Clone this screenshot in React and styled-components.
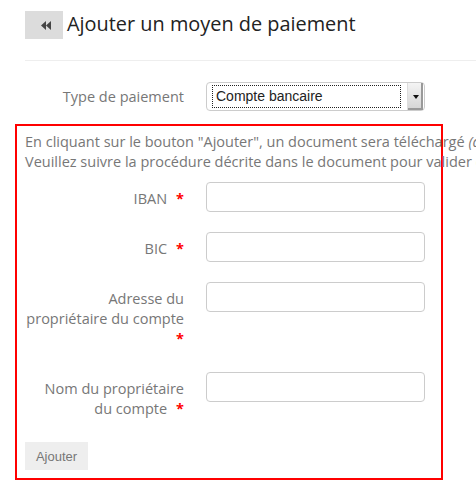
import React from 'react';
import styled, { createGlobalStyle } from 'styled-components';

const GlobalStyle = createGlobalStyle`
    html, body {
        margin: 0;
        padding: 0;
        background: #fff;
        overflow: hidden;
    }

    body {
        font-family: 'Open Sans', 'Noto Sans', sans-serif;
        font-size: 14.5px;
        line-height: 20px;
        color: #333;
    }
`;

const Page = styled.div`
    width: 476px;
    height: 492px;
    padding-top: 11px;
    box-sizing: border-box;
    overflow: hidden;
`;

const Header = styled.div`
    display: flex;
    align-items: flex-start;
    gap: 4px;
    padding-left: 25px;
`;

const BackButton = styled.button`
    display: flex;
    align-items: center;
    justify-content: center;
    width: 38px;
    height: 28px;
    padding: 0 0 0 4px;
    border: 0;
    background: #dcdcdc;
    color: #444;
    cursor: pointer;
`;

const Title = styled.h1`
    margin: 0;
    font-size: 19.9px;
    line-height: 26px;
    font-weight: 400;
    color: #222;
`;

const Divider = styled.hr`
    margin: 21px 0 0 25px;
    border: 0;
    border-top: 1px solid #eee;
`;

const TypeRow = styled.div`
    display: flex;
    align-items: center;
    margin-top: 21px;
    padding-left: 25px;
`;

const Label = styled.label`
    width: 159px;
    flex: none;
    padding: ${props => (props.top ? '7px 0 3px' : '0')};
    white-space: nowrap;
    text-align: right;
    color: #777;
`;

const Required = styled.span`
    margin-left: 9px;
    color: #f00;
    font-weight: 700;
`;

const Select = styled.div`
    display: flex;
    align-items: center;
    width: 219px;
    height: 29px;
    margin-left: 22px;
    padding: 0 1px 0 5px;
    box-sizing: border-box;
    border: 1px solid #ccc;
    border-radius: 4px;
    font-family: 'Liberation Sans', Arial, sans-serif;
    font-size: 14px;
    color: #222;
`;

const SelectValue = styled.span`
    flex: 1;
    height: 23px;
    line-height: 21px;
    padding-left: 3px;
    box-sizing: border-box;
    border: 1px dotted #222;
`;

const SelectArrow = styled.span`
    display: flex;
    align-items: center;
    justify-content: center;
    width: 15px;
    height: 27px;
    margin-left: 6px;
    border-left: 1px solid #ddd;
    box-shadow: inset -2px -2px 0 #999;
    background: linear-gradient(#f4f4f4, #d4d4d4);

    &::after {
        content: '';
        border-left: 3px solid transparent;
        border-right: 3px solid transparent;
        border-top: 4px solid #111;
    }
`;

const Panel = styled.div`
    width: 428px;
    height: 356px;
    margin: 13px 0 0 15px;
    padding: 6px 0 0 8px;
    box-sizing: border-box;
    border: 2px solid #f00;
`;

const Notice = styled.p`
    margin: 0 0 10px;
    white-space: nowrap;
    color: #777;

    em {
        font-style: italic;
    }
`;

const FieldRow = styled.div`
    display: flex;
    align-items: flex-start;
    margin-bottom: 20px;
`;

const Input = styled.input`
    width: 219px;
    height: 30px;
    margin-left: 22px;
    flex: none;
    box-sizing: border-box;
    border: 1px solid #ccc;
    border-radius: 4px;
    background: #fff;
`;

const SubmitButton = styled.button`
    width: 63px;
    height: 28px;
    padding: 0;
    border: 0;
    background: #eee;
    color: #777;
    font-family: 'Liberation Sans', Arial, sans-serif;
    font-size: 13px;
`;

const FastBackward = () => (
    <svg width="10" height="9" viewBox="0 0 10 9">
        <path d="M0 4.5 L5 0 V9 Z M5 4.5 L10 0 V9 Z" fill="currentColor" />
    </svg>
);

// each label is split where the reference wraps it
const fields = [
    { id: 'iban', lines: ['IBAN'] },
    { id: 'bic', lines: ['BIC'] },
    { id: 'address', lines: ['Adresse du', 'propriétaire du compte', ''] },
    { id: 'owner', lines: ['Nom du propriétaire', 'du compte'] },
];

const App = () => (
    <Page>
        <GlobalStyle />
        <Header>
            <BackButton aria-label="Retour">
                <FastBackward />
            </BackButton>
            <Title>Ajouter un moyen de paiement</Title>
        </Header>
        <Divider />
        <TypeRow>
            <Label>Type de paiement</Label>
            <Select>
                <SelectValue>Compte bancaire</SelectValue>
                <SelectArrow />
            </Select>
        </TypeRow>
        <Panel>
            <Notice>
                En cliquant sur le bouton "Ajouter", un document sera téléchargé <em>(au format PDF)</em>.
                <br />
                Veuillez suivre la procédure décrite dans le document pour valider ce moyen de paiement.
            </Notice>
            {fields.map(field => (
                <FieldRow key={field.id}>
                    <Label top htmlFor={field.id}>
                        {field.lines.map((line, i) => (
                            <React.Fragment key={i}>
                                {i > 0 && <br />}
                                {line}
                            </React.Fragment>
                        ))}
                        <Required>*</Required>
                    </Label>
                    <Input id={field.id} type="text" />
                </FieldRow>
            ))}
            <SubmitButton>Ajouter</SubmitButton>
        </Panel>
    </Page>
);

export default App;
